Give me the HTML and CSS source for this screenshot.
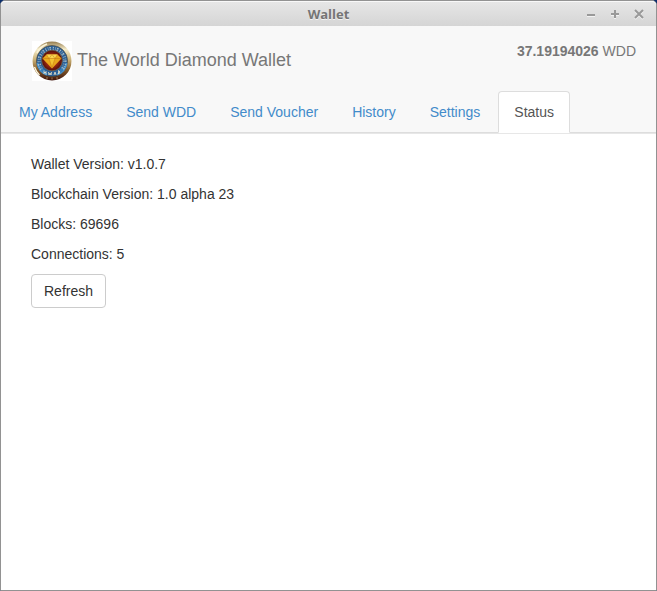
FILE: index.html
```html
<!DOCTYPE html>
<html lang="en">
<head>
<meta charset="utf-8">
<title>Wallet</title>
<link rel="stylesheet" href="styles.css">
</head>
<body>
<div class="window">
  <header class="titlebar">
    <h1 class="titlebar-text">Wallet</h1>
    <div class="window-controls">
      <button type="button" aria-label="Minimize"><svg viewBox="0 0 10 10"><path d="M1 6h8"/></svg></button>
      <button type="button" aria-label="Maximize"><svg viewBox="0 0 10 10"><path d="M1 5h8M5 1v8"/></svg></button>
      <button type="button" aria-label="Close"><svg viewBox="0 0 10 10"><path d="M1 1l8 8M9 1l-8 8"/></svg></button>
    </div>
  </header>
  <div class="navbar">
    <div class="brand-row">
      <div class="brand">
        <svg class="logo" viewBox="0 0 40 40" aria-hidden="true">
          <defs>
            <linearGradient id="gold" x1="0" y1="0" x2="0" y2="1">
              <stop offset="0" stop-color="#93794a"/>
              <stop offset=".2" stop-color="#f6edcb"/>
              <stop offset=".45" stop-color="#cdb47a"/>
              <stop offset=".7" stop-color="#8a6330"/>
              <stop offset="1" stop-color="#3d130c"/>
            </linearGradient>
            <radialGradient id="ruby">
              <stop offset="0" stop-color="#cc4a18"/>
              <stop offset=".6" stop-color="#96260f"/>
              <stop offset="1" stop-color="#4f0d0c"/>
            </radialGradient>
          </defs>
          <rect width="40" height="40" fill="#fff"/>
          <circle cx="20" cy="20" r="19.5" fill="url(#gold)"/>
          <path d="M5 12A17 17 0 0 1 15 3M2.500 26a18 18 0 0 0 5 8" fill="none" stroke="#fbf4d8" stroke-width="1.4"/>
          <circle cx="20" cy="20" r="15.600" fill="#2b5f96" stroke="#4d4636" stroke-width=".6"/>
          <path d="M5.500 22A14.500 14.500 0 0 0 15 33.500M34.500 22A14.500 14.500 0 0 1 25 33.500" fill="none" stroke="#4b93cb" stroke-width="2"/>
          <path d="M8.500 26a13 13 0 0 0 4 5M31.500 26a13 13 0 0 1-4 5" fill="none" stroke="#367db8" stroke-width="3"/>
          <path d="M9.500 28A13 13 0 1 1 30.500 28" fill="none" stroke="#d8ddd5" stroke-width="3" stroke-dasharray="1 1.400 .7 1 1.500 1.700" opacity=".75"/>
          <path d="M9.500 28A13 13 0 1 1 30.500 28" fill="none" stroke="#2c6399" stroke-width=".6"/>
          <path d="M12 29.500v3.500M14 30v3.500M12 31.500h2M16.500 31l.5 3 1-2 1 2 .5-3M22 34l1-3 1 3M26.500 29.500v3.500l1.500-2z" fill="none" stroke="#eee6c9" stroke-width=".8"/>
          <circle cx="20" cy="19.500" r="10.300" fill="url(#ruby)" stroke="#8d6c3c" stroke-width=".6"/>
          <path d="M14.500 13.500h11l4 4L20 27.500l-9.500-10z" fill="#e9a81c"/>
          <path d="M14.500 13.500h11l-2.500 4h-6z" fill="#f8d54e"/>
          <path d="M17 17.500h6l-3 9z" fill="#f5c532"/>
          <path d="M11 17.500h18M17 17.500l3 9 3-9M14.500 13.500l2.500 4 3-4 3 4 2.500-4" fill="none" stroke="#b8640f" stroke-width=".4"/>
          <path d="M15 36v2M20 36.500v2M25 36v2" stroke="#c4a56c" stroke-width=".7"/>
        </svg>
        <span>The World Diamond Wallet</span>
      </div>
      <div class="balance"><strong>37.19194026</strong> WDD</div>
    </div>
    <nav class="tabs">
      <a href="#address">My Address</a>
      <a href="#send">Send WDD</a>
      <a href="#voucher">Send Voucher</a>
      <a href="#history">History</a>
      <a href="#settings">Settings</a>
      <a href="#status" class="active" aria-current="page">Status</a>
    </nav>
  </div>
  <main class="content" id="status">
    <p>Wallet Version: v1.0.7</p>
    <p>Blockchain Version: 1.0 alpha 23</p>
    <p>Blocks: 69696</p>
    <p>Connections: 5</p>
    <button type="button" class="refresh">Refresh</button>
  </main>
</div>
</body>
</html>
```
FILE: styles.css
```css
* {
  box-sizing: border-box;
}

body {
  margin: 0;
  background: #0b2e6b;
  color: #333;
  font: 14px/20px "Liberation Sans", Arial, sans-serif;
}

.window {
  display: flex;
  flex-direction: column;
  min-height: 100vh;
  border: 1px solid #929292;
  border-radius: 5px 5px 0 0;
  background: #fff;
}

.titlebar {
  display: grid;
  grid-template-columns: 1fr auto 1fr;
  align-items: center;
  height: 25px;
  border-top: 1px solid #f8f8f8;
  border-radius: 4px 4px 0 0;
  background: linear-gradient(#e6e6e6, #d5d5d5);
}

.titlebar-text {
  grid-column: 2;
  margin: 0;
  color: #757575;
  font: bold 13px/24px "Open Sans", "Noto Sans", sans-serif;
  text-shadow: 0 1px #f2f2f2;
}

.window-controls {
  display: flex;
  justify-content: flex-end;
  gap: 14px;
  padding-right: 12px;
}

.window-controls button {
  width: 10px;
  height: 10px;
  padding: 0;
  border: 0;
  background: none;
}

.window-controls svg {
  display: block;
  fill: none;
  stroke: #999;
  stroke-width: 2;
  filter: drop-shadow(0 1px #f2f2f2);
}

.navbar {
  border-bottom: 1px solid #e7e7e7;
  background: #f8f8f8;
}

.brand-row {
  display: flex;
  justify-content: space-between;
  align-items: flex-start;
  padding: 15px 20px 10px 31px;
  color: #777;
}

.brand {
  display: flex;
  align-items: flex-start;
  gap: 5px;
  font-size: 18px;
  line-height: 38px;
}

.logo {
  width: 40px;
  height: 40px;
}

.tabs {
  display: flex;
  gap: 2px;
  padding-left: 2px;
  border-bottom: 1px solid #ddd;
}

.tabs a {
  margin-bottom: -1px;
  padding: 10px 15px;
  border: 1px solid transparent;
  border-radius: 4px 4px 0 0;
  color: #428bca;
  text-decoration: none;
}

.tabs .active {
  border-color: #ddd #ddd #fff;
  background: #fff;
  color: #555;
}

.content {
  padding: 20px 30px;
}

.content p {
  margin: 0 0 10px;
}

.refresh {
  padding: 6px 12px;
  border: 1px solid #ccc;
  border-radius: 4px;
  background: #fff;
  color: #333;
  font: inherit;
}
```
